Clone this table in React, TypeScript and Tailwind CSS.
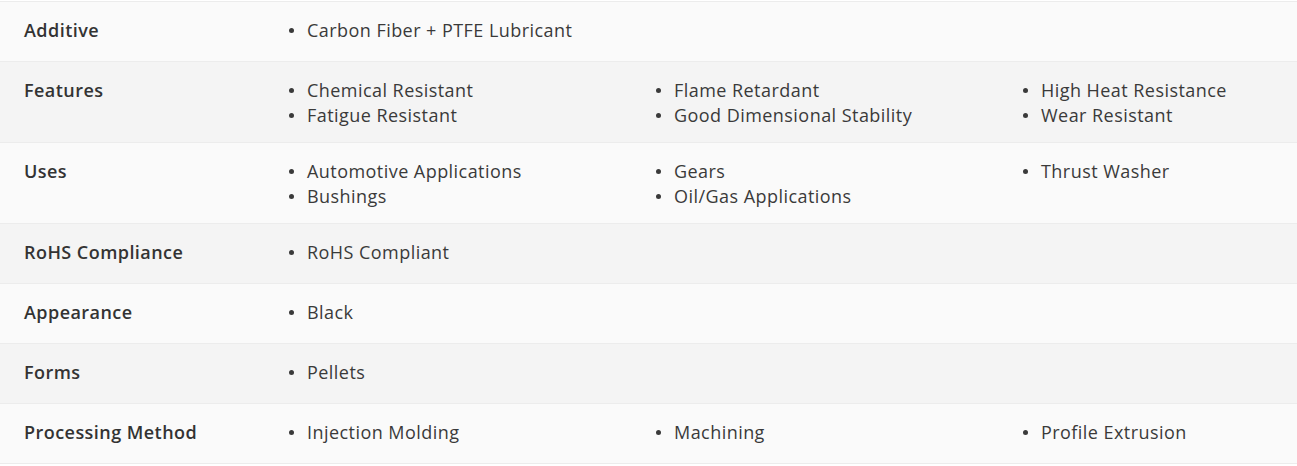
const rows: { label: string; cols: string[][] }[] = [
  { label: 'Additive', cols: [['Carbon Fiber + PTFE Lubricant']] },
  {
    label: 'Features',
    cols: [
      ['Chemical Resistant', 'Fatigue Resistant'],
      ['Flame Retardant', 'Good Dimensional Stability'],
      ['High Heat Resistance', 'Wear Resistant'],
    ],
  },
  {
    label: 'Uses',
    cols: [
      ['Automotive Applications', 'Bushings'],
      ['Gears', 'Oil/Gas Applications'],
      ['Thrust Washer'],
    ],
  },
  { label: 'RoHS Compliance', cols: [['RoHS Compliant']] },
  { label: 'Appearance', cols: [['Black']] },
  { label: 'Forms', cols: [['Pellets']] },
  {
    label: 'Processing Method',
    cols: [['Injection Molding'], ['Machining'], ['Profile Extrusion']],
  },
]

export default function App() {
  return (
    <div
      className="min-h-screen overflow-hidden bg-white pt-px text-[#3a3a3a]"
      style={{ fontFamily: '"Open Sans", "Liberation Sans", sans-serif' }}
    >
      <div className="border-t border-[#ececec]">
        {rows.map((row, i) => (
          <div
            key={row.label}
            className={`flex items-start overflow-hidden border-b border-[#ececec] ${i % 2 === 0 ? 'bg-[#fafafa]' : 'bg-[#f4f4f4]'}`}
          >
            <div className="w-[283px] shrink-0 pl-6 pt-[16px] pb-[18px] text-[18px] leading-[25px] font-semibold tracking-[0.45px] text-[#333]">
              {row.label}
            </div>
            <div className="flex pt-[16px] pb-[14px]">
              {row.cols.map((col, j) => (
                <ul key={j} className="w-[367px] shrink-0">
                  {col.map((item) => (
                    <li key={item} className="flex items-center text-[18px] leading-[25px] tracking-[0.45px]">
                      <span className="ml-[6px] mr-[13px] h-[5px] w-[5px] rounded-full bg-[#3a3a3a]" />
                      {item}
                    </li>
                  ))}
                </ul>
              ))}
            </div>
          </div>
        ))}
      </div>
    </div>
  )
}
